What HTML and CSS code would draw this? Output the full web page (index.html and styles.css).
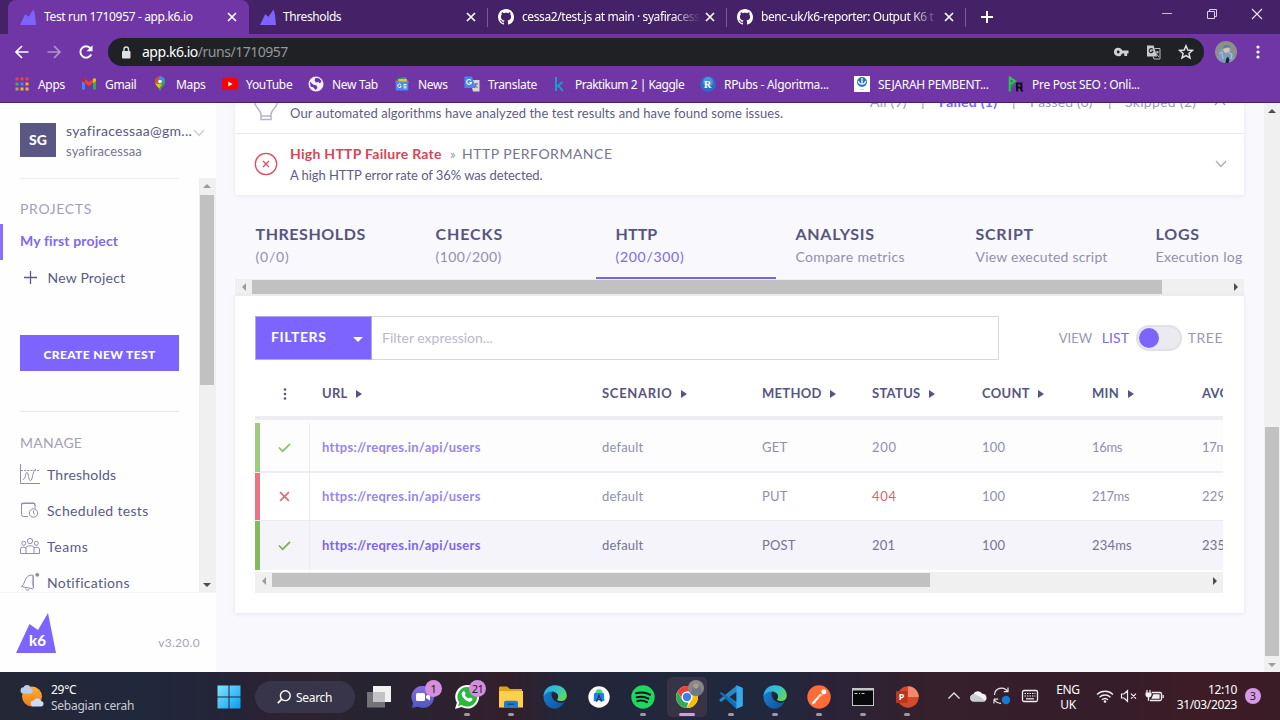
FILE: index.html
```html
<!DOCTYPE html>
<html lang="en">
<head>
<meta charset="utf-8">
<title>Test run 1710957 - app.k6.io</title>
<link rel="stylesheet" href="styles.css">
</head>
<body>
<svg class="sprite" xmlns="http://www.w3.org/2000/svg">
  <defs>
    <linearGradient id="g-win" x1="0" y1="0" x2="1" y2="1"><stop offset="0" stop-color="#7fe6ff"/><stop offset="1" stop-color="#0a9cf0"/></linearGradient>
    <linearGradient id="g-edge" x1="0" y1="0" x2="1" y2=".6"><stop offset="0" stop-color="#2aa7e6"/><stop offset=".55" stop-color="#34c3d0"/><stop offset="1" stop-color="#5fd85a"/></linearGradient>
    <linearGradient id="g-edge2" x1="0" y1="0" x2="1" y2="1"><stop offset="0" stop-color="#1b87d4"/><stop offset="1" stop-color="#0c4f9c"/></linearGradient>
    <linearGradient id="g-chat" x1="0" y1="0" x2="0" y2="1"><stop offset="0" stop-color="#8a6fe0"/><stop offset="1" stop-color="#4d55c4"/></linearGradient>
    <linearGradient id="g-sun" x1="0" y1="0" x2="0" y2="1"><stop offset="0" stop-color="#f9b13c"/><stop offset="1" stop-color="#ee7d16"/></linearGradient>
  </defs>
  <symbol id="peak" viewBox="0 0 16 16"><path fill="#7d64ff" d="M0 16 5.200 5.200 8.600 7.800 13.200.8C15 2 15.700 12 16 16z"/></symbol>
  <symbol id="cross" viewBox="0 0 10 10"><path d="M1 1l8 8M9 1l-8 8" fill="none" stroke="currentColor" stroke-width="1.700"/></symbol>
  <symbol id="github" viewBox="0 0 16 16"><path fill="#fff" d="M8 0C3.58 0 0 3.58 0 8c0 3.54 2.29 6.53 5.47 7.59.4.07.55-.17.55-.38 0-.19-.01-.82-.01-1.49-2.01.37-2.53-.49-2.69-.94-.09-.23-.48-.94-.82-1.13-.28-.15-.68-.52-.01-.53.63-.01 1.08.58 1.23.82.72 1.21 1.87.87 2.33.66.07-.52.28-.87.51-1.07-1.78-.2-3.64-.89-3.64-3.95 0-.87.31-1.59.82-2.15-.08-.2-.36-1.02.08-2.12 0 0 .67-.21 2.2.82.64-.18 1.32-.27 2-.27s1.36.09 2 .27c1.53-1.04 2.2-.82 2.2-.82.44 1.1.16 1.92.08 2.12.51.56.82 1.27.82 2.15 0 3.07-1.87 3.75-3.65 3.95.29.25.54.73.54 1.48 0 1.07-.01 1.93-.01 2.2 0 .21.15.46.55.38A8.01 8.01 0 0 0 16 8c0-4.42-3.58-8-8-8z"/></symbol>
  <symbol id="edge" viewBox="0 0 24 24"><path fill="url(#g-edge2)" d="M.5 11C1 4 6 .3 12 .3c0 4-5 6-3 11.700 1.500 4.500 7 6.500 12.500 4.800C19.500 21 16 23.700 12 23.700 5 23.700.2 18 .5 11z"/><path fill="url(#g-edge)" d="M.5 11C1.300 4 6.500.2 12.200.2 19 .2 23.800 5 23.800 10.500c0 4-3 5.800-6 5.800-2.300 0-3.800-.8-3.800-1.700 0-.7 1.100-1.100 1.100-3C15.100 9 12.500 6.500 8.800 6.500 5 6.500 2 8.400.5 11z"/><path fill="#232435" d="M14 14.600c0-.7 1.100-1.100 1.100-3 0-1.200-.6-2.300-1.600-3.200-2 .6-3.300 2.500-2.600 5 .8 3 4.400 4.800 8.400 4.100 1.200-.2 2-.9 1.900-1.700-3.500 1-7.200.4-7.200-1.200z"/></symbol>
  <symbol id="check" viewBox="0 0 14 11"><path d="M1 5.500 5 9.500 13 1.500" fill="none" stroke="currentColor" stroke-width="1.800"/></symbol>
  <symbol id="chev" viewBox="0 0 12 8"><path d="M1 1l5 5.500L11 1" fill="none" stroke="currentColor" stroke-width="1.400"/></symbol>
</svg>

<header class="chrome">
  <div class="tabstrip">
    <div class="tab tab-active"><svg class="fav"><use href="#peak"/></svg><span class="tab-title">Test run 1710957 - app.k6.io</span><svg class="close"><use href="#cross"/></svg></div>
    <div class="tab"><svg class="fav"><use href="#peak"/></svg><span class="tab-title">Thresholds</span><svg class="close"><use href="#cross"/></svg></div>
    <div class="tab"><svg class="fav"><use href="#github"/></svg><span class="tab-title fade">cessa2/test.js at main · syafiracess</span><svg class="close"><use href="#cross"/></svg></div>
    <div class="tab"><svg class="fav"><use href="#github"/></svg><span class="tab-title fade">benc-uk/k6-reporter: Output K6 t</span><svg class="close"><use href="#cross"/></svg></div>
    <svg class="newtab" viewBox="0 0 12 12"><path d="M6 0v12M0 6h12" stroke="#fff" stroke-width="2"/></svg>
    <div class="winbtns">
      <svg viewBox="0 0 12 12"><path d="M1 5.500h10" stroke="#c9b9d8"/></svg>
      <svg viewBox="0 0 12 12"><path d="M1.500 3.500h7v7h-7zM3.500 3V1.500h7v7H9" fill="none" stroke="#d9cfe2"/></svg>
      <svg viewBox="0 0 12 12"><path d="M1 1l10 10M11 1L1 11" stroke="#eee6f4" stroke-width="1.100"/></svg>
    </div>
  </div>
  <div class="toolbar">
    <svg class="nav" viewBox="0 0 16 16"><path d="M14.500 8H2M8 2 2 8l6 6" fill="none" stroke="#fff" stroke-width="1.700"/></svg>
    <svg class="nav dim" viewBox="0 0 16 16"><path d="M1.500 8H14M8 2l6 6-6 6" fill="none" stroke="#fff" stroke-width="1.700"/></svg>
    <svg class="nav" viewBox="0 0 16 16"><path d="M13.200 10.500A5.700 5.700 0 1 1 12.500 4.300" fill="none" stroke="#fff" stroke-width="1.900"/><path d="M14.500 1.300v6h-6z" fill="#fff"/></svg>
    <div class="omnibox">
      <svg class="lock" viewBox="0 0 10 13"><rect x="1" y="5" width="8.500" height="7.500" rx="1" fill="#dfe1e5"/><path d="M3 5V3.300a2.250 2.250 0 0 1 4.500 0V5" fill="none" stroke="#dfe1e5" stroke-width="1.400"/></svg>
      <span class="url"><b>app.k6.io</b>/runs/1710957</span>
      <svg class="key" viewBox="0 0 16 10"><path fill="#d0d2d6" fill-rule="evenodd" d="M4.500.5a4.500 4.500 0 0 1 4.200 3H15.500v3H14v2.800h-3V6.500H8.700a4.500 4.500 0 1 1-4.200-6zm0 3a1.500 1.500 0 1 0 0 3 1.500 1.500 0 0 0 0-3z"/></svg>
      <svg class="trans" viewBox="0 0 15 15"><path fill="#c9cbcf" d="M1 .5h6.500L11 11.500H1z"/><path d="M8.500 3.500h5.500v10.500H8l-1-2.500M9 7h4.500M11.300 6v1c0 2-1 3-2 4M9.500 8l3.500 4" fill="none" stroke="#b9bbc0"/><path d="M6.800 4.500a2 2 0 1 0 .3 1.700H5.400" fill="none" stroke="#222528" stroke-width="1.100"/></svg>
      <svg class="star" viewBox="0 0 16 16"><path d="M8 1.800l1.800 4.200 4.600.4-3.500 3 1.100 4.500L8 11.500l-4 2.400 1.100-4.500-3.500-3 4.600-.4z" fill="none" stroke="#dfe1e5" stroke-width="1.500"/></svg>
    </div>
    <svg class="avatar" viewBox="0 0 22 22"><circle cx="11" cy="11" r="11" fill="#8d8f8c"/><path d="M2 17C5 13 3 9 8 6c4-2 8 0 8 4 0 4 3 4 4 7a11 11 0 0 1-18 0z" fill="#7f9cbc"/><path d="M4 13l3-2 1 7M14 12l3 1-1 5" fill="none" stroke="#b5c4d6"/><circle cx="11.500" cy="8.500" r="3.200" fill="#d5c3b4"/><path d="M7.500 8c0-5 8-5 8-1-3-1-5 0-8 1z" fill="#5c7d93"/><path d="M10.500 22l.5-4 2-2.500 1.500 3.500-1 3z" fill="#1c2238"/></svg>
    <svg class="kebab" viewBox="0 0 4 14"><circle cx="2" cy="2" r="1.600" fill="#fff"/><circle cx="2" cy="7" r="1.600" fill="#fff"/><circle cx="2" cy="12" r="1.600" fill="#fff"/></svg>
  </div>
  <nav class="bookmarks">
    <a class="bm b1"><svg viewBox="0 0 16 16"><path fill="#e8453c" d="M1.500 1.500h3v3h-3zm5 0h3v3h-3zm5 0h3v3h-3z"/><path fill="#43a862" d="M1.500 6.500h3v3h-3z"/><path fill="#3f8bf2" d="M6.500 6.500h3v3h-3z"/><path fill="#f2a73a" d="M11.500 6.500h3v3h-3zm0 5h3v3h-3z"/><path fill="#9cb04a" d="M1.500 11.500h3v3h-3z"/><path fill="#f0b83a" d="M6.500 11.500h3v3h-3z"/></svg><span>Apps</span></a>
    <a class="bm b2"><svg viewBox="0 0 16 16"><path fill="#4285f4" d="M1 4.500v9h3V7z"/><path fill="#34a853" d="M12 7v6.500h3v-9z"/><path fill="#ea4335" d="M1 3.500C1 2 3 1.800 4 3l4 3 4-3v4l-4 3.200L4 7z"/><path fill="#fbbc04" d="M12 3c1-1.200 3-1 3 .5V5l-3 2.200z"/><path fill="#c5221f" d="M1 3.500C1 2 3 1.800 4 3v4L1 5z"/></svg><span>Gmail</span></a>
    <a class="bm b3"><svg viewBox="0 0 16 16"><path fill="#34a853" d="M8 15.500C7 11 2.800 9.500 2.800 5.500a5.200 5.200 0 0 1 10.400 0C13.200 9.500 9 11 8 15.500z"/><path fill="#fbbc04" d="M3.200 7.500 10 8.500 7 12.500C6 10.500 4 9.500 3.200 7.500z"/><path fill="#ea4335" d="M4 2.200A5 5 0 0 1 8 .3L6 6 3 7C2.500 5 3 3.300 4 2.200z"/><path fill="#4285f4" d="M8 .3c2.500 0 4.200 1.500 4.900 3.200L9 8 6 5z"/><circle cx="8" cy="5.500" r="1.800" fill="#fff"/></svg><span>Maps</span></a>
    <a class="bm b4"><svg viewBox="0 0 16 16"><rect y="2" width="16" height="12" rx="2.500" fill="#f00"/><path d="M6.300 5.500v5L10.500 8z" fill="#fff"/></svg><span>YouTube</span></a>
    <a class="bm b5"><svg viewBox="0 0 16 16"><circle cx="8" cy="8" r="7.500" fill="#f3eef8"/><path fill="#6d35a4" d="M7.500 2 11 2.300 13.500 5 12 7.500 10.500 6 8 6.500 6.500 4.500zM2 5.500 5 8.500 8.500 9.500 9.500 12 7.500 14 5.500 11.500 2.500 10.500z"/></svg><span>New Tab</span></a>
    <a class="bm b6"><svg viewBox="0 0 16 16"><path fill="#2f9e55" d="M3 2.500 12 .8l.8 5H3z"/><path fill="#ea5a45" d="M1.200 5 4 4.200V8H2zM12 4l2.800 1L14 8h-2z"/><path fill="#f3bc33" d="M4.500 3h8.500v3h-8.500z"/><rect x="1.800" y="5.500" width="12.500" height="9" rx="1" fill="#4a8bf0"/><path d="M7 8.700a1.800 1.800 0 1 0 .3 1.500H6M9.500 8.500h3M9.500 10.200h3M9.500 11.900h3" fill="none" stroke="#fff"/></svg><span>News</span></a>
    <a class="bm b7"><svg viewBox="0 0 16 16"><path fill="#d5d8dd" d="M6 4h9.500v11.500H9z"/><path fill="#4a87ee" d="M.5.500H8L11.500 12H.5z"/><path d="M7 4.500A2.400 2.400 0 1 0 7.400 6.500H5.500" fill="none" stroke="#fff" stroke-width="1.100"/><path d="M10 8h4M12 7v1c0 2-1 3-1.500 4M11 9l2.500 3" fill="none" stroke="#5d7180"/></svg><span>Translate</span></a>
    <a class="bm b8"><svg viewBox="0 0 16 16"><path fill="none" stroke="#149fc8" stroke-width="2" d="M5 1v14M11.500 6 5.500 11M7.500 9.500l4.300 5.500"/></svg><span>Praktikum 2 | Kaggle</span></a>
    <a class="bm b9"><svg viewBox="0 0 16 16"><circle cx="8" cy="8" r="7.700" fill="#2b6fc2"/><circle cx="8" cy="6" r="5" fill="#4d92da"/><text x="4" y="12" class="serif-r">R</text></svg><span>RPubs - Algoritma...</span></a>
    <a class="bm b10"><svg viewBox="0 0 16 16"><path fill="#fff" d="M0 0h16v16H0z"/><circle cx="8" cy="6" r="5" fill="#2a78ba"/><path d="M8 2v6M4.500 5c0 4 7 4 7 0" stroke="#e6efe6" stroke-width="1.400" fill="none"/><path d="M6 13.500h4" stroke="#c7d3df"/></svg><span>SEJARAH PEMBENT...</span></a>
    <a class="bm b11"><svg viewBox="0 0 16 16"><path d="M1.800 15.500V1.500L7 5 2 8.500" fill="none" stroke="#2dc253" stroke-width="2.200"/><path d="M3 15V11l4-3" fill="none" stroke="#159b3c" stroke-width="1.200"/><path d="M9 15.500V7.500h4.500v4H9M12 11.500l2.500 4" fill="none" stroke="#131018" stroke-width="2"/></svg><span>Pre Post SEO : Onli...</span></a>
  </nav>
</header>

<div class="app">
  <aside class="side">
    <div class="account">
      <div class="initials">SG</div>
      <div class="who"><div class="mail">syafiracessaa@gm...</div><div class="org">syafiracessaa</div></div>
      <svg class="chev lilac"><use href="#chev"/></svg>
    </div>
    <div class="side-scroll">
      <div class="side-body">
        <h4 class="h-projects">PROJECTS</h4>
        <div class="proj">My first project</div>
        <div class="newproj"><svg viewBox="0 0 13 13"><path d="M6.500 0v13M0 6.500h13" stroke="#5b5b84" stroke-width="1.300"/></svg><span>New Project</span></div>
        <div class="create">CREATE NEW TEST</div>
        <hr class="side-hr">
        <h4 class="h-manage">MANAGE</h4>
        <ul class="manage">
          <li><svg viewBox="0 0 20 20"><path d="M.5 0v19.500H20" /><path d="M1 6.500h18" stroke-dasharray="2 1.200"/><path d="M3 15.500c3 0 2-7 4-7s1 8 3.500 8S12 7 16 5"/></svg><span class="m1">Thresholds</span></li>
          <li><svg viewBox="0 0 20 20"><path d="M8 16.500H3.500a2 2 0 0 1-2-2V3.500h13.500v5M1.500 5.500 2.500 3h11.500l1 2.500"/><circle cx="13.500" cy="13" r="4.200"/><path d="M13.500 10.500v2.800l1.700 1.200"/></svg><span class="m2">Scheduled tests</span></li>
          <li><svg viewBox="0 0 20 20"><circle cx="10" cy="5" r="2.600"/><circle cx="3.700" cy="7.300" r="2"/><circle cx="16.300" cy="7.300" r="2"/><path d="M6 17.500v-6c0-2.300 8-2.300 8 0v6zM6 17.500H.5v-4.700c0-1.500 3-2.200 5.500-1M14 17.500h5.500v-4.700c0-1.500-3-2.200-5.500-1"/></svg><span class="m3">Teams</span></li>
          <li><svg viewBox="0 0 20 20"><path d="M1.500 14.500c3-2 2.500-5 4.500-8 1.500-2.500 4-4 7-3.300M13 3.500c1 3-1 6 .5 12.500zM1.500 14.500l12 2.500M5.500 16.500c.5 2 3 2.500 3.800.5"/><circle cx="17.300" cy="2.800" r="1.500" class="dot"/></svg><span class="m4">Notifications</span></li>
        </ul>
      </div>
      <div class="vbar side-bar"><i class="up dim-arrow"></i><b class="side-thumb"></b><i class="down"></i></div>
    </div>
    <div class="side-foot">
      <svg class="k6" viewBox="0 0 40 40"><path fill="#7d64ff" d="M0 40 13.500 11 22 17 32 0l8 40z"/><text x="13" y="33" class="k6t">k6</text></svg>
      <span class="ver">v3.20.0</span>
    </div>
  </aside>

  <main class="main">
    <section class="insights">
      <div class="ins-head">
        <svg class="bulb" viewBox="0 0 26 30"><path d="M8 21.500C8 16 1.500 15 1.500 8h23c0 7-6.500 8-6.500 13.500v5H8zM8 23h10" fill="none" stroke="#b6b3c9" stroke-width="1.500"/></svg>
        <div class="ins-desc">Our automated algorithms have analyzed the test results and have found some issues.</div>
        <div class="ins-filter"><span class="f1">All (9)</span><i>|</i><span class="f2">Failed (1)</span><i>|</i><span class="f3">Passed (6)</span><i class="s3">|</i><span class="f4">Skipped (2)</span><svg class="chev flip"><use href="#chev"/></svg></div>
      </div>
      <div class="ins-item">
        <svg class="err" viewBox="0 0 24 24"><circle cx="12" cy="12" r="10.700"/><path d="M9 9l6 6M15 9l-6 6"/></svg>
        <div class="ins-text">
          <div class="ins-title"><strong>High HTTP Failure Rate</strong><em>»</em><span>HTTP PERFORMANCE</span></div>
          <div class="ins-sub">A high HTTP error rate of 36% was detected.</div>
        </div>
        <svg class="chev grey"><use href="#chev"/></svg>
      </div>
    </section>

    <div class="rtabs">
      <div class="rtab r1"><b>THRESHOLDS</b><span>(0/0)</span></div>
      <div class="rtab r2"><b>CHECKS</b><span>(100/200)</span></div>
      <div class="rtab r3 on"><b>HTTP</b><span>(200/300)</span></div>
      <div class="rtab r4"><b>ANALYSIS</b><span>Compare metrics</span></div>
      <div class="rtab r5"><b>SCRIPT</b><span>View executed script</span></div>
      <div class="rtab r6"><b>LOGS</b><span>Execution log</span></div>
    </div>
    <div class="hbar"><i class="left dim-arrow"></i><b class="h1"></b><i class="right"></i></div>

    <section class="panel">
      <div class="controls">
        <div class="filters"><span>FILTERS</span><i></i></div>
        <div class="expr">Filter expression...</div>
        <div class="view"><span class="v1">VIEW</span><span class="v2">LIST</span><div class="switch"><i></i></div><span class="v3">TREE</span></div>
      </div>
      <div class="table">
        <div class="row head">
          <div class="c0"><svg viewBox="0 0 4 12"><circle cx="2" cy="1.500" r="1.300"/><circle cx="2" cy="6" r="1.300"/><circle cx="2" cy="10.500" r="1.300"/></svg></div>
          <div>URL<i></i></div><div class="wide">SCENARIO<i></i></div><div>METHOD<i></i></div><div>STATUS<i></i></div><div>COUNT<i></i></div><div>MIN<i></i></div><div>AVG<i></i></div>
        </div>
        <div class="row r-get">
          <div class="c0"><svg><use href="#check"/></svg></div>
          <div class="link">https://reqres.in/api/users</div><div>default</div><div>GET</div><div class="st">200</div><div>100</div><div class="ms">16ms</div><div class="ms">17ms</div>
        </div>
        <div class="row r-put">
          <div class="c0"><svg><use href="#cross"/></svg></div>
          <div class="link">https://reqres.in/api/users</div><div>default</div><div>PUT</div><div class="st bad">404</div><div>100</div><div class="ms">217ms</div><div>229ms</div>
        </div>
        <div class="row r-post">
          <div class="c0"><svg><use href="#check"/></svg></div>
          <div class="link">https://reqres.in/api/users</div><div>default</div><div>POST</div><div>201</div><div>100</div><div>234ms</div><div>235ms</div>
        </div>
      </div>
      <div class="hbar hbar2"><i class="left dim-arrow"></i><b class="h2"></b><i class="right"></i></div>
    </section>
  </main>
  <div class="vbar page-bar"><i class="up"></i><b class="page-thumb"></b><i class="down dim-arrow"></i></div>
</div>

<footer class="taskbar">
  <div class="weather">
    <svg viewBox="0 0 26 26"><circle cx="13" cy="12.500" r="10" fill="url(#g-sun)"/><path d="M4 9.500a3.200 3.200 0 0 1 .5-6.300A4 4 0 0 1 12 4.500a2.600 2.600 0 0 1 0 5z" fill="#b9cdf0"/><path d="M14.500 22.500a3 3 0 0 1 .3-6 4 4 0 0 1 7.300.5 2.800 2.800 0 0 1 .4 5.500z" fill="#cfdcf5"/></svg>
    <div><div class="deg">29°C</div><div class="cond">Sebagian cerah</div></div>
  </div>
  <div class="slots">
    <div class="slot"><svg class="i24" viewBox="0 0 24 24"><path fill="url(#g-win)" d="M.5.500h11v11H.5zM12.500.500h11v11h-11zM.5 12.500h11v11H.5zM12.500 12.500h11v11h-11z"/></svg></div>
    <div class="search"><svg viewBox="0 0 14 14"><circle cx="8.300" cy="5.700" r="4.900" fill="none" stroke="#fff" stroke-width="1.400"/><path d="M4.800 9.200.8 13.200" stroke="#fff" stroke-width="1.700"/></svg><span>Search</span></div>
    <div class="slot"><svg class="i24" viewBox="0 0 24 24"><path fill="#f1f1f2" d="M6 1h18v16H6z"/><path fill="#7b7b7e" fill-opacity=".92" d="M0 7h18v15.500H0z"/><path fill="#c3c3c5" d="M6 7h12v10H6z"/></svg></div>
    <div class="slot"><svg class="i24" viewBox="0 0 24 24"><path fill="url(#g-chat)" d="M12 1a11 11 0 1 1-5 20.800L1 23l1-5.500A11 11 0 0 1 12 1z"/><rect x="5" y="8" width="9" height="8" rx="1.500" fill="#fff"/><path d="M15 11l4-2.500v7L15 13z" fill="#fff"/></svg><b class="badge">1</b></div>
    <div class="slot run"><svg class="i24" viewBox="0 0 24 24"><path fill="#fff" d="M12.200 0a11.800 11.800 0 1 1-5.700 22.100L0 24l1.900-6.300A11.800 11.800 0 0 1 12.200 0z"/><path fill="#2cb742" d="M12.200 2a9.800 9.800 0 1 1-5.400 17.900L3 21l1.200-3.700A9.800 9.800 0 0 1 12.200 2z"/><path fill="#fff" d="M8.500 6.300c.5-.3 1-.2 1.300.4l.8 1.900c.2.500-.8 1.200-.8 1.500.8 1.600 2 2.700 3.800 3.500.5.100 1-1.200 1.500-1.100l2.200 1.100c.6.300 0 2.800-2.300 3.200-3 .4-8-4-8.300-7.500 0-1.300.8-2.600 1.800-3z"/></svg><b class="badge">21</b></div>
    <div class="slot run"><svg class="i26" viewBox="0 0 26 24"><path fill="#e0a21b" d="M1 3c0-1 .5-1.500 1.500-1.500H9L12 4h12v5H1z"/><path fill="#fbd04f" d="M1 6h24v16.500H1z"/><path fill="#1e7cc9" d="M6 23v-5c0-1.500.8-2.300 2.300-2.300h9.400c1.500 0 2.300.8 2.300 2.300v5z"/><path fill="#0d4f93" d="M9.500 18.500h7V20h-7z"/></svg></div>
    <div class="slot"><svg class="i24"><use href="#edge"/></svg></div>
    <div class="slot"><svg class="i22" viewBox="0 0 22 22"><circle cx="11" cy="11" r="10.700" fill="#fdfdfd"/><path d="M6 7.500l2-1h6l2 1 .3 7.500-3.300.5-2-5-2 5-3.300-.5z" fill="#1f7fe0"/><path d="M7.500 6.800a3.500 3.500 0 0 1 7 0z" fill="#3ddc84"/><path d="M8.500 15.500l2.500-6 2.500 6M9.500 13.500h3" stroke="#0c3a75" stroke-width="1.400" fill="none"/></svg></div>
    <div class="slot run"><svg class="i24" viewBox="0 0 24 24"><circle cx="12" cy="12" r="11.700" fill="#1ed760"/><path d="M5 8.300c5-1.400 10-.9 14 1.300M5.700 12.300c4-1.100 8.300-.7 11.700 1.300M6.300 16c3.500-.8 6.700-.5 9.700 1.100" fill="none" stroke="#10151a" stroke-width="2" stroke-linecap="round"/></svg></div>
    <div class="slot active"><svg class="i24" viewBox="0 0 24 24"><circle cx="12" cy="12" r="11" fill="#fff"/><path fill="#ea4335" d="M2.500 6.500A11 11 0 0 1 21.500 6.500H12a5.500 5.500 0 0 0-4.800 8.200z"/><path fill="#34a853" d="M2.500 6.500l4.700 8.200A5.500 5.500 0 0 0 13.500 17.300L11.500 23A11 11 0 0 1 2.500 6.500z"/><path fill="#fbbc04" d="M21.500 6.500a11 11 0 0 1-10 16.500l5.200-8.200A5.500 5.500 0 0 0 12 6.500z"/><circle cx="12" cy="12" r="5.300" fill="#fff"/><circle cx="12" cy="12" r="4.200" fill="#3b7de9"/></svg><svg class="mini" viewBox="0 0 16 16"><circle cx="8" cy="8" r="8" fill="#8b8785"/><path d="M3 14c1-5 1-8 5-9s5 4 6 8a8 8 0 0 1-11 1z" fill="#6d7888"/><circle cx="8" cy="6" r="2.500" fill="#b09c93"/></svg></div>
    <div class="slot run"><svg class="i24" viewBox="0 0 24 24"><path fill="#2489ca" d="M17.500.3 23.700 3v18l-6.200 2.700L6.500 13.500 2.300 17 .5 16v-1.500L17 1z"/><path fill="#1070b3" d="M.5 8 2.300 7 17.500 18.500v5.200z"/><path fill="#38a8ec" d="M17.500.3 23.700 3v18l-6.200 2.700z"/><path fill="#24263a" d="M17.300 7v10L10.500 12z"/></svg></div>
    <div class="slot run"><svg class="i24"><use href="#edge"/></svg></div>
    <div class="slot run"><svg class="i24" viewBox="0 0 24 24"><circle cx="12" cy="12" r="11.700" fill="#ff6c37"/><path d="M5.500 18.500 14 9.500" stroke="#fff" stroke-width="2"/><path d="M5 19l3.500-1.500" stroke="#fff"/><circle cx="16.800" cy="6.800" r="2.500" fill="#fff"/><path d="M11 13l5-4" stroke="#f7b49a" stroke-width="1.300"/></svg></div>
    <div class="slot run"><svg class="i22" viewBox="0 0 22 18"><path fill="#c3c5c8" d="M0 0h22v18H0z"/><path fill="#08090b" d="M1 2.500h20V17H1z"/><path d="M2.500 5.500h3M7 5.500h1M9.500 5.500h3" stroke="#c9c9c9"/></svg></div>
    <div class="slot run"><svg class="i24" viewBox="0 0 24 24"><circle cx="13" cy="12" r="10.700" fill="#d8492b"/><path fill="#f38a6c" d="M13 1.300A10.700 10.700 0 0 1 23.700 12H13z"/><rect x="1" y="6" width="11.500" height="12" rx="1" fill="#b9371c"/><text x="3.700" y="15.300" class="ppt">P</text></svg></div>
  </div>
  <div class="tray">
    <svg class="t24" viewBox="0 0 24 24"><path d="M6.500 14.500 12 9l5.500 5.500" fill="none" stroke="#e8e4ea" stroke-width="1.300"/></svg>
    <svg class="t24" viewBox="0 0 24 24"><path fill="#f4f4f6" d="M7.500 17.500a3.700 3.700 0 0 1-.2-7.300 5 5 0 0 1 9-.4 4 4 0 0 1 1.700 7.700z"/><path fill="#c9cbd0" d="M7.500 17.500a3.700 3.700 0 0 1-.2-7.300c3 0 6 1.500 12 6.800-.5.400-1 .5-1.500.5z"/></svg>
    <svg class="t24" viewBox="0 0 24 24"><path d="M4.500 11a7 7 0 0 1 13-3.500M18 3.500v4.200h-4.200M4 15.200h4.200M4 15.200v4.200M4.500 16A7.500 7.500 0 0 0 11 19.300" fill="none" stroke="#e8e4ea" stroke-width="1.200"/><circle cx="16" cy="16" r="4.200" fill="#1479d8"/></svg>
    <svg class="t32" viewBox="0 0 32 24"><rect x="8.500" y="6.500" width="15" height="11" rx="1.500" fill="none" stroke="#f2eff3" stroke-width="1.300"/><path d="M10.500 9.500h11M10.500 12h11" stroke="#f2eff3" stroke-dasharray="1.500 1"/><path d="M12 14.800h8" stroke="#f2eff3" stroke-width="1.200"/></svg>
    <div class="lang">ENG<br>UK</div>
    <svg class="t24" viewBox="0 0 24 24"><path d="M4 10.500a11.500 11.500 0 0 1 16 0M6.500 13.200a8 8 0 0 1 11 0M9 15.800a4.500 4.500 0 0 1 6 0" fill="none" stroke="#f2eff3" stroke-width="1.300"/><circle cx="12" cy="17.500" r="1.300" fill="#f2eff3"/></svg>
    <svg class="t24" viewBox="0 0 24 24"><path d="M4.500 10v4H7l3.500 3.300V6.700L7 10zM14 9.700l5 5M19 9.700l-5 5" fill="none" stroke="#f2eff3" stroke-width="1.200"/></svg>
    <svg class="t26" viewBox="0 0 26 24"><path d="M11 8.500h8a1.500 1.500 0 0 1 1.500 1.500v5a1.500 1.500 0 0 1-1.500 1.500H9" fill="none" stroke="#f2eff3" stroke-width="1.300"/><path fill="#f2eff3" d="M12.300 10.300h6.300v4.500h-8.300zM21.500 11h1.300v3h-1.300zM4.500 8.500h6v2.700a2.500 2.500 0 0 1-2.300 2v3.500H6.800v-3.500a2.500 2.500 0 0 1-2.300-2z"/><path d="M6 9V6M9 9V6" stroke="#f2eff3" stroke-width="1.200"/></svg>
    <div class="clock">12:10<br>31/03/2023</div>
    <div class="notif">3</div>
  </div>
</footer>
</body>
</html>
```
FILE: styles.css
```css
* { box-sizing: border-box; }
body { margin: 0; width: 1280px; height: 720px; overflow: hidden; display: flex; flex-direction: column; font-family: "Lato", sans-serif; background: #f9f8fd; }
svg { display: block; flex: none; }
.sprite { position: absolute; width: 0; height: 0; }
i, em { font-style: normal; }

/* browser window */
.chrome { height: 103px; background: #7036a5; border-bottom: 1px solid #45226a; font-family: "Noto Sans", sans-serif; color: #fff; }
.tabstrip { height: 34px; background: #452268; display: flex; align-items: center; padding-left: 8px; }
.tab { width: 239px; height: 34px; display: flex; align-items: center; padding-left: 10px; background: linear-gradient(#7d5c9c, #7d5c9c) right 8px / 1px 19px no-repeat; }
.tab-active { width: 241px; background: #7036a5; border-radius: 8px 8px 0 0; padding-left: 12px; }
.tab-active + .tab { padding-left: 11px; }
.fav { width: 16px; height: 16px; }
.tab-title { flex: none; width: 182px; margin-left: 8px; font-size: 12px; letter-spacing: -.4px; white-space: nowrap; line-height: 20px; }
.tab-active .tab-title { letter-spacing: -.35px; }
.tab-active + .tab .tab-title { margin-left: 7px; }
.fade { -webkit-mask-image: linear-gradient(90deg, #000 150px, transparent 178px); mask-image: linear-gradient(90deg, #000 150px, transparent 178px); }
.close { width: 10px; height: 10px; margin-left: 1px; }
.newtab { width: 12px; height: 12px; margin-left: 15px; }
.winbtns { margin-left: auto; display: flex; gap: 33px; padding-right: 17px; margin-top: -6px; }
.winbtns svg { width: 12px; height: 12px; }
.toolbar { height: 36px; display: flex; align-items: center; padding: 0 20px 0 14px; }
.nav { width: 16px; height: 16px; margin-right: 16px; }
.nav.dim { opacity: .45; }
.omnibox { flex: 1; height: 28px; margin: 0 11px 0 -2px; border-radius: 14px; background: #202124; display: flex; align-items: center; padding: 0 10px 0 13px; }
.lock { width: 10px; height: 13px; margin-right: 11px; }
.url { flex: 1; font-size: 14px; letter-spacing: -.48px; color: #94979b; line-height: 20px; }
.url b { color: #fff; font-weight: 400; }
.key { width: 15px; height: 10px; margin-right: 17px; }
.trans { width: 15px; height: 15px; margin-right: 17px; }
.star { width: 16px; height: 16px; }
.avatar { width: 22px; height: 22px; margin-right: 19px; }
.kebab { width: 4px; height: 14px; }
.bookmarks { height: 28px; display: flex; align-items: center; padding-left: 14px; font-size: 12px; letter-spacing: -.3px; }
.bm { display: flex; align-items: center; gap: 8px; white-space: nowrap; }
.bm svg { width: 16px; height: 16px; }
.b1 { width: 67px; } .b2 { width: 71px; } .b3 { width: 70px; } .b4 { width: 86px; } .b5 { width: 86px; }
.b6 { width: 70px; } .b7 { width: 87px; } .b8 { width: 149px; letter-spacing: -.5px; } .b9 { width: 154px; } .b10 { width: 154px; }
.serif-r { font: bold 10px "Liberation Serif", serif; fill: #fff; }

/* application */
.app { height: 569px; display: flex; background: #f9f8fd; }
.side { width: 216px; background: #fefefe; display: flex; flex-direction: column; }
.account { height: 75px; display: flex; padding: 20px 11px 0 20px; }
.initials { flex: none; width: 36px; height: 34px; background: #5b5784; color: #fff; font-weight: 900; font-size: 14px; line-height: 34px; text-align: center; }
.who { flex: none; width: 127px; margin-left: 10px; color: #5b5a80; white-space: nowrap; }
.mail { font-size: 14px; line-height: 18px; margin-top: -1px; letter-spacing: .3px; }
.org { font-size: 13px; line-height: 22px; color: #76748f; letter-spacing: .12px; }
.chev { width: 12px; height: 8px; }
.lilac { color: #cfcbe3; margin-top: 6px; }
.side-scroll { height: 415px; display: flex; border-bottom: 1px solid #f5f4f8; }
.side-body { width: 199px; padding: 0 20px; overflow: hidden; background: linear-gradient(#ededf2, #ededf2) 20px 0 / 159px 1px no-repeat; }
h4 { margin: 0; font-weight: 400; font-size: 14px; line-height: 20px; color: #a3a1b6; letter-spacing: .25px; }
.h-projects { margin-top: 21px; letter-spacing: .7px; }
h4.h-projects { letter-spacing: .65px; }
.proj { margin: 5px 0 0 -20px; padding-left: 17px; border-left: 3px solid #8a70ff; height: 36px; line-height: 34px; color: #8168f0; font-weight: 700; font-size: 14px; letter-spacing: .13px; }
.newproj { height: 36px; display: flex; align-items: center; gap: 11px; margin-top: -1px; padding: 1px 0 0 3.5px; color: #5b5b84; font-size: 14px; letter-spacing: .2px; }
.newproj svg { width: 13px; height: 13px; }
.create { margin-top: 40px; height: 36px; background: #7d64ff; color: #fff; font-weight: 900; font-size: 12px; line-height: 39px; text-align: center; letter-spacing: .38px; }
.side-hr { margin: 40px 0 0; border: 0; height: 1px; background: #e6e5ec; }
.h-manage { margin-top: 21px; }
.manage { list-style: none; margin: 3px 0 0; padding: 0; }
.manage li { height: 36px; display: flex; align-items: center; gap: 7px; font-size: 14px; color: #5b5b84; letter-spacing: .32px; }
.manage .m1 { letter-spacing: .22px; }
.manage .m3 { letter-spacing: .6px; }
.manage svg { width: 20px; height: 20px; fill: none; stroke: #8f8da8; stroke-width: 1; }
.manage .dot { fill: #8f8da8; }
.side-foot { height: 79px; display: flex; justify-content: space-between; padding: 20px 16px 0 15.5px; }
.k6 { width: 40px; height: 40px; }
.k6t { font: 900 15px "Lato", sans-serif; fill: #fff; }
.ver { font-size: 12px; color: #a6a4b8; line-height: 20px; margin-top: 20px; letter-spacing: .3px; }

/* scrollbars */
.vbar { width: 16px; background: #f0f0f0; display: flex; flex-direction: column; align-items: center; }
.vbar i, .hbar i { flex: none; width: 0; height: 0; border: 4px solid transparent; }
.vbar .up { border-bottom-color: #4d4d4d; border-top: 0; margin: 6px 0; }
.vbar .down { border-top-color: #4d4d4d; border-bottom: 0; margin: auto 0 5px; }
.vbar .up.dim-arrow { border-bottom-color: #9c9c9c; }
.vbar .down.dim-arrow { border-top-color: #9c9c9c; }
.vbar b, .hbar b { background: #c1c1c1; display: block; }
.side-bar { width: 17px; padding-right: 1px; }
.side-thumb { width: 14px; height: 190px; margin-top: 1px; }
.page-bar { margin-left: auto; }
.page-thumb { width: 14px; height: 229px; margin-top: 308px; }
.hbar { width: 1009px; height: 16px; background: #f0f0f0; display: flex; align-items: center; }
.hbar .left { border-right-color: #4d4d4d; border-left: 0; margin: 0 6px 0 7px; }
.hbar .right { border-left-color: #4d4d4d; border-right: 0; margin: 0 6px 0 auto; }
.hbar .left.dim-arrow { border-right-color: #9c9c9c; }
.h1 { width: 910px; height: 14px; }
.h2 { width: 658px; height: 14px; }

/* content */
.main { margin-left: 19px; width: 1009px; }
.insights { height: 92px; background: #fff; box-shadow: 0 1px 4px rgba(80,70,130,.1); }
.ins-head { height: 31px; border-bottom: 1px solid #e9e8ee; display: flex; padding-left: 18px; overflow: hidden; color: #5f5d80; }
.bulb { width: 26px; height: 30px; margin-top: -10px; }
.ins-desc { flex: none; width: 569px; margin-left: 11px; font-size: 13px; line-height: 20px; white-space: nowrap; letter-spacing: .07px; }
.ins-filter { flex: none; margin-left: 11px; margin-top: -10px; display: flex; align-items: center; height: 17px; font-size: 14px; color: #9a98b0; white-space: nowrap; }
.ins-filter span, .ins-filter i { flex: none; }
.f1 { width: 51px; letter-spacing: .2px; } .f2 { width: 73px; color: #7d64ff; font-weight: 700; letter-spacing: .25px; } .f3 { width: 78px; letter-spacing: .1px; } .f4 { width: 89px; letter-spacing: .3px; }
.ins-filter i { width: 18px; }
.ins-filter .s3 { width: 17px; }
.flip { transform: scaleY(-1); }
.ins-item { height: 61px; display: flex; align-items: center; padding: 0 17px 2px 19px; }
.err { width: 24px; height: 24px; fill: none; stroke: #df4a5e; stroke-width: 1.300; }
.ins-text { flex: 1; margin-left: 12px; white-space: nowrap; color: #5f5d80; }
.ins-title { font-size: 14px; line-height: 20px; display: flex; margin-top: 2px; }
.ins-title strong { width: 160px; color: #d94456; letter-spacing: .28px; }
.ins-title em { width: 12px; color: #9a98b0; font-size: 13px; }
.ins-title span { color: #76748f; letter-spacing: .5px; }
.ins-sub { font-size: 13px; line-height: 22px; letter-spacing: -.06px; }
.grey { color: #b0aebf; }
.rtabs { height: 84px; display: flex; overflow: hidden; padding-left: .5px; }
.rtab { flex: none; width: 180px; padding: 28px 0 0 20px; color: #9190a9; border-bottom: 2px solid transparent; white-space: nowrap; }
.rtab b { display: block; color: #57557f; font-size: 16px; line-height: 22px; }
.rtab span { display: block; font-size: 14px; line-height: 24px; }
.r1 b { letter-spacing: .55px; } .r1 span { letter-spacing: .8px; }
.r2 b { letter-spacing: .9px; } .r2 span { letter-spacing: .4px; }
.r3 b { letter-spacing: .1px; } .r3 span { letter-spacing: .7px; }
.r4 b { letter-spacing: .7px; } .r4 span { letter-spacing: .33px; }
.r5 b { letter-spacing: .75px; } .r5 span { letter-spacing: .2px; }
.r6 b { letter-spacing: .8px; } .r6 span { letter-spacing: .33px; }
.rtab.on { border-bottom-color: #7e64dc; }
.rtab.on span { color: #8066ea; }

.panel { height: 318px; background: #fff; box-shadow: 0 1px 4px rgba(80,70,130,.12); padding: 21px 21px 0 20px; border-top: 1px solid #ededf1; }
.controls { height: 44px; display: flex; margin-top: -1px; }
.filters { width: 117px; background: #7d64ff; border: 1px solid #b3a6f0; display: flex; align-items: center; justify-content: space-between; padding: 0 8px 3px 15px; color: #fff; font-size: 14px; font-weight: 700; letter-spacing: .6px; }
.filters i { border: 5px solid transparent; border-top-color: #fff; border-bottom: 0; margin-top: 5px; }
.expr { width: 627px; border: 1px solid #d9d8e2; border-left: 0; padding-left: 10px; line-height: 41px; font-size: 14px; color: #bbb9c9; }
.view { margin-left: auto; display: flex; align-items: center; color: #9a98b0; font-size: 14px; line-height: 20px; padding-bottom: 1px; }
.v1 { font-size: 13px; width: 43px; }
.v2 { color: #8066ea; width: 34px; letter-spacing: .1px; }
.v3 { letter-spacing: .5px; }
.switch { width: 46px; height: 26px; border-radius: 13px; background: #eceaf1; border: 2px solid #e1dfe7; margin: 1px 6px 0 0; }
.switch i { display: block; width: 20px; height: 20px; border-radius: 50%; background: #7d64ff; margin: 1px; }
.table { width: 968px; overflow: hidden; }
.row { width: 1045px; display: grid; grid-template-columns: 55px 280px 160px 110px 110px 110px 110px 110px; height: 49px; font-size: 13px; line-height: 49px; color: #9190a9; border-bottom: 1px solid #ebeaf0; letter-spacing: .2px; }
.row > div { padding-left: 12px; white-space: nowrap; }
.row .c0 { padding: 0; display: flex; align-items: center; justify-content: center; border-left: 5px solid; border-right: 1px solid #ebeaf0; }
.row .c0 svg { width: 13px; height: 11px; }
.head { height: 60px; border-bottom: 4px solid #eeedf2; color: #57557f; font-weight: 700; line-height: 66px; letter-spacing: .3px; }
.head .wide { letter-spacing: .7px; }
.head .c0 { border-color: transparent; }
.head .c0 svg { width: 4px; height: 12px; fill: #57557f; margin-top: 1px; }
.head i { display: inline-block; border: 4.500px solid transparent; border-left: 6px solid #57557f; border-right: 0; margin-left: 8.5px; }
.r-get { height: 53px; background: #fdfdfd; padding-top: 3px; border-bottom: 2px solid #ededf1; }
.r-get .c0 { border-left-color: #9ccc7c; color: #8cc270; }
.r-put { height: 48px; line-height: 47px; }
.r-put .c0 { border-left-color: #ec7480; color: #e0707c; }
.r-post { height: 49px; background: #f5f4fa; color: #75738f; border-bottom: 0; }
.r-post .c0 { border-left-color: #83ba5c; color: #76b352; }
.row .link { color: #9a84f0; font-weight: 700; letter-spacing: .28px; }
.r-post .link { color: #7d64ee; }
.row .st { letter-spacing: .7px; }
.row .ms { letter-spacing: -.35px; }
.row .bad { color: #e25f70; }
.hbar2 { width: 968px; height: 21px; margin-top: 2px; align-items: flex-start; padding-top: 1px; }
.hbar2 i { margin-top: 4px !important; }

/* taskbar */
.taskbar { height: 48px; display: flex; color: #fff; font-family: "Noto Sans", sans-serif; font-size: 12px; background: linear-gradient(90deg, #242736 0, #20283c 150px, #252337 230px, #2f2230 300px, #262432 370px, #331f2c 510px, #232538 560px, #20283e 760px, #2a2338 830px, #35202b 930px, #351d2a 1100px, #3d1c26 1200px, #3a1c26 100%); }
.weather { width: 207px; display: flex; padding: 11px 0 0 19px; line-height: 16px; letter-spacing: -.25px; }
.weather svg { width: 26px; height: 26px; margin: 1px 6px 0 0; }
.cond { color: #c8cbd4; }
.weather div div { margin-top: -1px; height: 17px; }
.slots { display: flex; padding-top: 1px; }
.slot { width: 44px; height: 48px; display: flex; align-items: center; justify-content: center; position: relative; }
.i24 { width: 24px; height: 24px; } .i22 { width: 22px; height: 22px; } .i26 { width: 26px; height: 24px; }
.search { width: 100px; height: 32px; margin: 8px 2px 0 4px; border-radius: 16px; background: #38354a; display: flex; align-items: center; padding-left: 22px; gap: 5px; letter-spacing: -.3px; }
.search svg { width: 14px; height: 14px; }
.run::after { content: ""; position: absolute; left: 19px; bottom: 5px; width: 6px; height: 3px; border-radius: 2px; background: #9c9aa5; }
.active { background: #363446; width: 40px; height: 40px; margin: 4px 2px 0; border-radius: 5px; }
.active::after { content: ""; position: absolute; left: 12px; bottom: 1px; width: 16px; height: 3px; border-radius: 2px; background: #d69be0; }
.mini { position: absolute; width: 16px; height: 16px; left: 21px; top: 3px; }
.badge { position: absolute; left: 24px; top: 7px; width: 17px; height: 17px; border-radius: 50%; background: #d58ddd; color: #2a1830; font-size: 11px; font-weight: 400; line-height: 17px; text-align: center; letter-spacing: -.5px; }
.ppt { font: bold 9px "Noto Sans", sans-serif; fill: #fff; }
.tray { margin-left: auto; display: flex; align-items: center; padding-right: 19px; }
.t24 { width: 24px; height: 24px; } .t32 { width: 32px; height: 24px; } .t26 { width: 26px; height: 24px; }
.lang { width: 44px; text-align: center; line-height: 15px; letter-spacing: -.4px; margin-right: 3px; padding-top: 1px; }
.clock { width: 70px; text-align: right; line-height: 15px; letter-spacing: -.35px; padding-top: 1px; }
.notif { width: 16px; height: 16px; margin-left: 8px; border-radius: 50%; background: #d79be6; color: #2a1830; font-size: 11px; line-height: 16px; text-align: center; }
```
